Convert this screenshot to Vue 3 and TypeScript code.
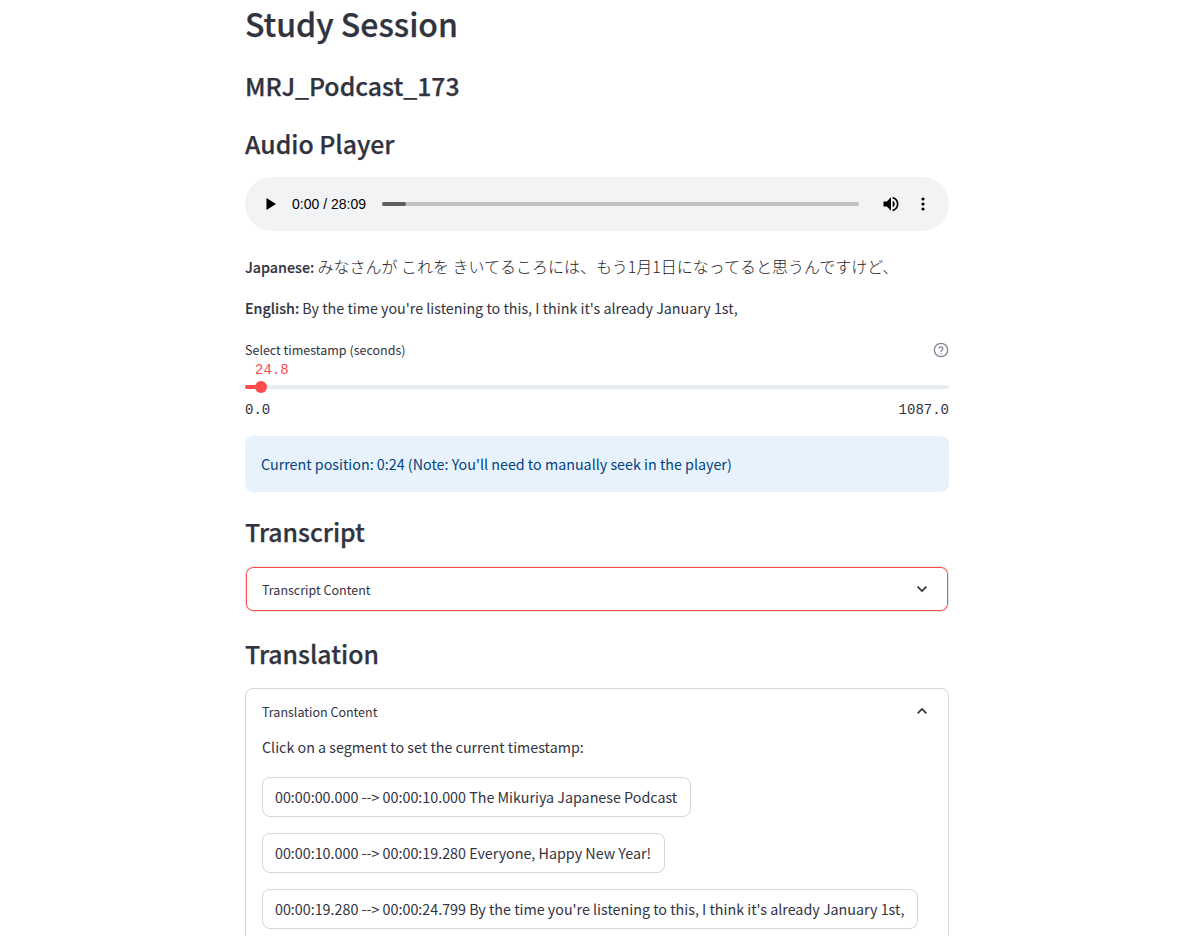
<template>
  <main class="page">
    <div class="block">
      <h1>Study Session</h1>
      <h3 class="file-title">MRJ_Podcast_173</h3>
      <h3 class="section-first">Audio Player</h3>

      <div class="player">
        <svg class="play" viewBox="0 0 12 14" width="12" height="14"><path d="M1.5 1v12L11 7z" fill="#000" /></svg>
        <span class="time">0:00 / 28:09</span>
        <div class="progress"><div class="progress-done" :style="{ width: playedPct + '%' }"></div></div>
        <svg class="volume" viewBox="0 0 24 24" width="20" height="20">
          <path fill="#000" d="M3 9v6h4l5 5V4L7 9H3zm13.5 3c0-1.77-1.02-3.29-2.5-4.03v8.05c1.48-.73 2.5-2.25 2.5-4.02zM14 3.23v2.06c2.89.86 5 3.54 5 6.71s-2.11 5.85-5 6.71v2.06c4.01-.91 7-4.49 7-8.77s-2.99-7.86-7-8.77z" />
        </svg>
        <svg class="more" viewBox="0 0 4 14" width="4" height="14">
          <circle cx="2" cy="2" r="1.6" /><circle cx="2" cy="7" r="1.6" /><circle cx="2" cy="12" r="1.6" />
        </svg>
      </div>

      <p class="line-jp"><strong>Japanese:</strong> <span class="jp">みなさんが これを きいてるころには、もう1月1日になってると思うんですけど、</span></p>
      <p class="line-en"><strong>English:</strong> By the time you're listening to this, I think it's already January 1st,</p>

      <div class="slider">
        <div class="slider-label">
          <span>Select timestamp (seconds)</span>
          <svg viewBox="0 0 24 24" width="16" height="16" fill="none" stroke="#808495" stroke-width="2" stroke-linecap="round">
            <circle cx="12" cy="12" r="10" />
            <path d="M9 9.2a3 3 0 0 1 5.8 1c0 2-2.8 2.4-2.8 4" />
            <path d="M12 17.6v.1" />
          </svg>
        </div>
        <div class="slider-value">24.8</div>
        <div class="track">
          <div class="track-fill"></div>
          <div class="thumb"></div>
        </div>
        <div class="slider-ends"><span>0.0</span><span>1087.0</span></div>
      </div>

      <div class="alert">Current position: 0:24 (Note: You'll need to manually seek in the player)</div>

      <h3 class="section">Transcript</h3>
      <div class="expander focused">
        <div class="expander-head">
          <span>Transcript Content</span>
          <svg viewBox="0 0 24 24" width="16" height="16" fill="none" stroke="#31333f" stroke-width="2.6"><path d="M5.5 8.5 12 15l6.5-6.5" /></svg>
        </div>
      </div>

      <h3 class="section">Translation</h3>
      <div class="expander open">
        <div class="expander-head">
          <span>Translation Content</span>
          <svg viewBox="0 0 24 24" width="16" height="16" fill="none" stroke="#31333f" stroke-width="2.6"><path d="M5.5 15.5 12 9l6.5 6.5" /></svg>
        </div>
        <div class="expander-body">
          <p class="hint">Click on a segment to set the current timestamp:</p>
          <button v-for="seg in segments" :key="seg" type="button" class="seg">{{ seg }}</button>
        </div>
      </div>
    </div>
  </main>
</template>

<script setup lang="ts">
const playedPct = 5;

const segments: string[] = [
  "00:00:00.000 --> 00:00:10.000 The Mikuriya Japanese Podcast",
  "00:00:10.000 --> 00:00:19.280 Everyone, Happy New Year!",
  "00:00:19.280 --> 00:00:24.799 By the time you're listening to this, I think it's already January 1st,",
];
</script>

<style>
html,
body {
  margin: 0;
  background: #fff;
  overflow: hidden;
}
</style>

<style scoped>
.page {
  height: 936px;
  overflow: hidden;
  padding-right: 7px;
  font-family: "Noto Sans CJK JP", "Noto Sans", sans-serif;
  color: #31333f;
}
.block {
  width: 704px;
  margin: 0 auto;
}
h1 {
  margin: 0;
  height: 50px;
  font-size: 32px;
  line-height: 46px;
  font-weight: 500;
  -webkit-text-stroke: 0.25px #31333f;
}
h3 {
  margin: 0;
  padding-bottom: 2px;
  font-size: 24.8px;
  font-weight: 500;
  line-height: 34px;
  -webkit-text-stroke: 0.25px #31333f;
}
.file-title {
  margin-top: 18px;
}
.section-first {
  margin-top: 22px;
}
.section {
  margin-top: 22px;
}
.focused + .section {
  margin-top: 24px;
}
.player {
  margin-top: 15px;
  height: 54px;
  border-radius: 27px;
  background: #f1f3f4;
  display: flex;
  align-items: center;
  padding: 0 20px;
  box-sizing: border-box;
  color: #000;
}
.time {
  margin-left: 15px;
  font-family: "Liberation Sans", sans-serif;
  font-size: 14px;
}
.progress {
  margin-left: 16px;
  width: 477px;
  height: 4px;
  border-radius: 2px;
  background: #bfc0c0;
}
.progress-done {
  height: 100%;
  border-radius: 2px;
  background: #5e5e5e;
}
.volume {
  margin-left: 22px;
}
.more {
  margin-left: 20px;
}
p {
  margin: 0;
  font-size: 14.3px;
  line-height: 26px;
}
strong {
  font-weight: 500;
  -webkit-text-stroke: 0.15px #31333f;
}
.jp {
  font-size: 16px;
  line-height: 1;
  font-weight: 300;
  color: #1f2029;
}
.line-jp {
  height: 26px;
  margin-top: 23px;
}
.line-en {
  margin-top: 16px;
  line-height: 24px;
  padding-bottom: 2px;
}
.slider {
  margin-top: 17px;
}
.slider-label {
  display: flex;
  justify-content: space-between;
  align-items: center;
  font-size: 12.5px;
  height: 21px;
  margin-bottom: 2px;
}
.slider-value {
  font-family: "Liberation Mono", monospace;
  font-size: 14px;
  line-height: 16px;
  color: #ff4b4b;
  padding-left: 10px;
}
.track {
  position: relative;
  margin-top: 7px;
  height: 4px;
  border-radius: 2px;
  background: #e6eaf1;
}
.track-fill {
  width: 16px;
  height: 100%;
  border-radius: 2px;
  background: #ff4b4b;
}
.thumb {
  position: absolute;
  left: 10px;
  top: -4px;
  width: 12px;
  height: 12px;
  border-radius: 50%;
  background: #ff4b4b;
}
.slider-ends {
  display: flex;
  justify-content: space-between;
  margin-top: 13px;
  font-family: "Liberation Mono", monospace;
  font-size: 14px;
  line-height: 16px;
}
.alert {
  margin-top: 18px;
  height: 56px;
  border-radius: 8px;
  background: #e8f2fc;
  color: #004280;
  font-size: 14.3px;
  line-height: 56px;
  padding-left: 16px;
}
.expander {
  border: 1px solid #d6d6d9;
  border-radius: 8px;
  box-sizing: border-box;
}
.expander.focused {
  margin-top: 16px;
  height: 46px;
  border-color: #e4e4e6;
  box-shadow: inset 0 0 0 1px #ff4b4b;
}
.expander.open {
  margin-top: 16px;
  height: 300px;
}
.expander-head {
  height: 44px;
  display: flex;
  justify-content: space-between;
  align-items: center;
  padding: 0 18px 0 16px;
  font-size: 12.5px;
}
.expander-body {
  padding: 0 16px;
}
.hint {
  margin: 1px 0 17px;
  line-height: 26px;
}
.seg {
  display: block;
  height: 40px;
  margin-top: 16px;
  padding: 0 13px 2px 12px;
  border: 1px solid #d6d6d9;
  border-radius: 8px;
  background: #fff;
  color: #31333f;
  font-family: inherit;
  font-size: 14.3px;
  white-space: nowrap;
}
</style>
